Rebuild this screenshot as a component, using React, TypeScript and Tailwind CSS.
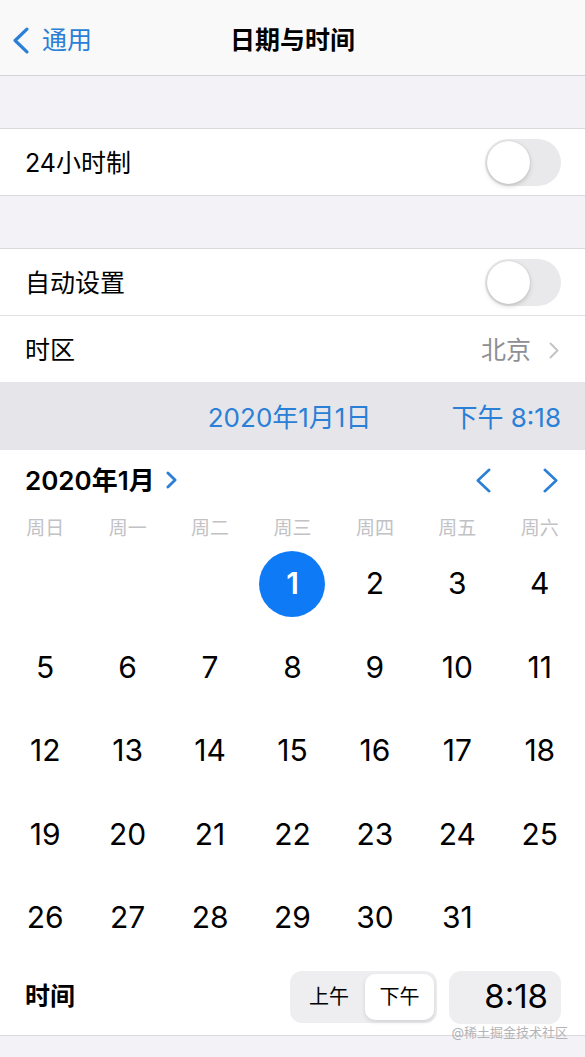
import React from "react";

const font = {
  fontFamily: '"Inter", "Noto Sans CJK SC", sans-serif',
};

function Chevron({
  dir,
  className,
  width,
  height,
  stroke,
}: {
  dir: "left" | "right";
  className: string;
  width: number;
  height: number;
  stroke: number;
}) {
  const pad = stroke / 2 + 0.5;
  const d =
    dir === "left"
      ? `M${width - pad} ${pad} L${pad} ${height / 2} L${width - pad} ${height - pad}`
      : `M${pad} ${pad} L${width - pad} ${height / 2} L${pad} ${height - pad}`;
  return (
    <svg
      width={width}
      height={height}
      viewBox={`0 0 ${width} ${height}`}
      className={className}
      fill="none"
      stroke="currentColor"
      strokeWidth={stroke}
      strokeLinecap="round"
      strokeLinejoin="round"
    >
      <path d={d} />
    </svg>
  );
}

function Toggle() {
  return (
    <div className="w-[76px] h-[47px] rounded-full bg-[#e9e9eb] p-[2px] flex items-center">
      <div className="w-[43px] h-[43px] rounded-full bg-white shadow-[0_2px_5px_rgba(0,0,0,0.18),0_0_1px_rgba(0,0,0,0.15)]" />
    </div>
  );
}

const weekdays = ["周日", "周一", "周二", "周三", "周四", "周五", "周六"];

export default function App() {
  const days: (number | null)[] = [null, null, null];
  for (let i = 1; i <= 31; i++) days.push(i);
  while (days.length < 35) days.push(null);

  return (
    <div className="w-[585px] h-[1057px] bg-[#f2f2f7] overflow-hidden relative" style={font}>
      {/* nav bar */}
      <div className="h-[76px] bg-[#f9f9f9] border-b border-[#d4d4d8] relative flex items-center justify-center pt-[6px]">
        <div className="absolute left-[13px] top-[6px] bottom-0 flex items-center gap-[13px] text-[#2a7fd6]">
          <Chevron dir="left" width={16} height={27} stroke={3.2} className="" />
          <span className="text-[25px] leading-none">通用</span>
        </div>
        <span className="text-[25px] font-semibold text-black leading-none">日期与时间</span>
      </div>

      <div className="h-[52px]" />

      {/* 24h */}
      <div className="bg-white border-y border-[#dadade] h-[68px] flex items-center justify-between pl-[25px] pr-[24px]">
        <span className="text-[25px] text-black pt-[3px]">24小时制</span>
        <Toggle />
      </div>

      <div className="h-[52px]" />

      {/* auto / timezone */}
      <div className="bg-white border-t border-[#dadade]">
        <div className="h-[67px] flex items-center justify-between pl-[25px] pr-[24px] border-b border-[#e2e2e6]">
          <span className="text-[25px] text-black pt-[3px]">自动设置</span>
          <Toggle />
        </div>
        <div className="h-[66px] flex items-center justify-between pl-[25px] pr-[26px] pt-[3px]">
          <span className="text-[25px] text-black">时区</span>
          <div className="flex items-center gap-[18px] text-[#8e8e93]">
            <span className="text-[25px]">北京</span>
            <Chevron dir="right" width={10} height={17} stroke={2} className="text-[#c4c4c8]" />
          </div>
        </div>
      </div>

      {/* selected date band */}
      <div className="h-[68px] bg-[#e5e5ea] flex items-center justify-end gap-[80px] pr-[24px] pt-[2px] text-[#2a7fd6] text-[26px]">
        <span>2020年1月1日</span>
        <span>下午 8:18</span>
      </div>

      {/* calendar */}
      <div className="bg-white border-b border-[#dadade]">
        <div className="h-[60px] flex items-center justify-between pl-[25px] pr-[27px]">
          <div className="flex items-center gap-[11px]">
            <span className="text-[26px] font-semibold text-black">2020年1月</span>
            <Chevron dir="right" width={11} height={18} stroke={2.8} className="text-[#2a7fd6]" />
          </div>
          <div className="flex items-center gap-[52px] text-[#2a7fd6]">
            <Chevron dir="left" width={15} height={25} stroke={2.6} className="" />
            <Chevron dir="right" width={15} height={25} stroke={2.6} className="" />
          </div>
        </div>

        <div className="grid grid-cols-7 px-[4px] h-[32px] pt-[5px] items-center">
          {weekdays.map((w) => (
            <div key={w} className="text-center text-[19px] text-[#c2c2c6]">
              {w}
            </div>
          ))}
        </div>

        <div className="grid grid-cols-7 px-[4px]">
          {days.map((d, i) => (
            <div key={i} className="h-[83.5px] flex items-center justify-center">
              {d === 1 ? (
                <div className="w-[66px] h-[66px] rounded-full bg-[#0f7af6] flex items-center justify-center text-white text-[30px] font-semibold">
                  1
                </div>
              ) : d ? (
                <span className="text-[30px] text-black">{d}</span>
              ) : null}
            </div>
          ))}
        </div>

        {/* time row */}
        <div className="h-[75px] flex items-center justify-between pl-[25px] pr-[24px] relative">
          <span className="text-[25px] font-semibold text-black">时间</span>
          <div className="flex items-center gap-[12px]">
            <div className="w-[147px] h-[52px] rounded-[12px] bg-[#eeeef0] p-[3px] flex">
              <div className="flex-1 flex items-center justify-center text-[20px] text-black">上午</div>
              <div className="w-[69px] rounded-[10px] bg-white shadow-[0_2px_4px_rgba(0,0,0,0.12)] flex items-center justify-center text-[20px] text-black">
                下午
              </div>
            </div>
            <div className="w-[112px] h-[53px] rounded-[12px] bg-[#eeeef0] flex items-center justify-end pr-[13px] text-[33px] text-black">
              8:18
            </div>
          </div>
          <span className="absolute right-[17px] bottom-[-4px] text-[13px] text-[#b4b4b8] leading-none">
            @稀土掘金技术社区
          </span>
        </div>
      </div>
    </div>
  );
}
